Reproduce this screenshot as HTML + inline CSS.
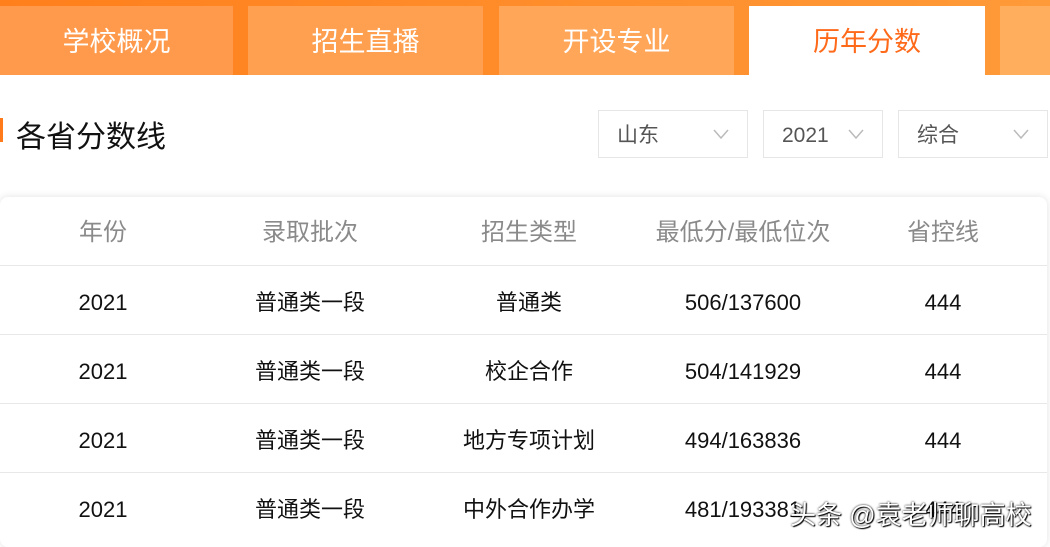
<!DOCTYPE html>
<html><head><meta charset="utf-8"><style>
*{margin:0;padding:0;box-sizing:border-box}
body{width:1050px;height:544px;overflow:hidden;background:#fff;font-family:"Liberation Sans","Noto Sans CJK SC",sans-serif;position:relative}
.bar{position:absolute;left:0;top:0;width:1050px;height:75px;background:linear-gradient(90deg,#ff7f1c,#ff9a38)}
.tab{position:absolute;top:6px;height:69px;color:#fff;font-size:27px;text-align:center;line-height:72px}
.t1{left:0;width:233px;background:#ff9a4c}
.t2{left:248px;width:235px;background:#ffa050}
.t3{left:499px;width:235px;background:#ffa658}
.t4{left:749px;width:236px;background:#fff;color:#ff6a1a}
.t5{left:1000px;width:50px;background:#ffae5e}
.mark{position:absolute;left:0;top:118px;width:3px;height:24px;background:#ff7a1a}
.title{position:absolute;left:16px;top:112px;font-size:30px;color:#111}
.sel{position:absolute;top:110px;height:48px;border:1px solid #e6e6e6;font-size:21px;color:#555;line-height:50px;padding-left:18px}
.sel svg{position:absolute;right:18px;top:18px}
.card{position:absolute;left:0;top:197px;width:1047px;height:350px;border-radius:8px;box-shadow:0 0 8px rgba(0,0,0,.12);background:#fff}
.row{position:absolute;left:0;width:1047px;height:69px;border-bottom:1px solid #e8e8e8}
.c{position:absolute;top:2px;line-height:69px;width:300px;margin-left:-150px;text-align:center;font-size:22px;color:#111}
.h .c{font-size:24px;color:#8a8a8a;top:1px}
.wm{position:absolute;left:790px;top:495px;font-size:26px;color:#fff;text-shadow:0 0 2px #000,1px 1px 1px #000}
</style></head><body>
<div class="bar"></div>
<div class="tab t1">学校概况</div><div class="tab t2">招生直播</div><div class="tab t3">开设专业</div><div class="tab t4">历年分数</div><div class="tab t5"></div>
<div class="mark"></div><div class="title">各省分数线</div>
<div class="sel" style="left:598px;width:150px">山东<svg width="16" height="10"><path d="M1 1L8 9L15 1" fill="none" stroke="#bbb" stroke-width="1.5"/></svg></div>
<div class="sel" style="left:763px;width:120px">2021<svg width="16" height="10"><path d="M1 1L8 9L15 1" fill="none" stroke="#bbb" stroke-width="1.5"/></svg></div>
<div class="sel" style="left:898px;width:150px">综合<svg width="16" height="10"><path d="M1 1L8 9L15 1" fill="none" stroke="#bbb" stroke-width="1.5"/></svg></div>
<div class="card">
<div class="row h" style="top:0"><div class="c" style="left:103px">年份</div><div class="c" style="left:310px">录取批次</div><div class="c" style="left:529px">招生类型</div><div class="c" style="left:743px">最低分/最低位次</div><div class="c" style="left:943px">省控线</div></div>
<div class="row" style="top:69px"><div class="c" style="left:103px">2021</div><div class="c" style="left:310px">普通类一段</div><div class="c" style="left:529px">普通类</div><div class="c" style="left:743px">506/137600</div><div class="c" style="left:943px">444</div></div>
<div class="row" style="top:138px"><div class="c" style="left:103px">2021</div><div class="c" style="left:310px">普通类一段</div><div class="c" style="left:529px">校企合作</div><div class="c" style="left:743px">504/141929</div><div class="c" style="left:943px">444</div></div>
<div class="row" style="top:207px"><div class="c" style="left:103px">2021</div><div class="c" style="left:310px">普通类一段</div><div class="c" style="left:529px">地方专项计划</div><div class="c" style="left:743px">494/163836</div><div class="c" style="left:943px">444</div></div>
<div class="row" style="top:276px;border:none"><div class="c" style="left:103px">2021</div><div class="c" style="left:310px">普通类一段</div><div class="c" style="left:529px">中外合作办学</div><div class="c" style="left:743px">481/193381</div><div class="c" style="left:943px">444</div></div>
</div>
<div class="wm">头条 @袁老师聊高校</div>
</body></html>
